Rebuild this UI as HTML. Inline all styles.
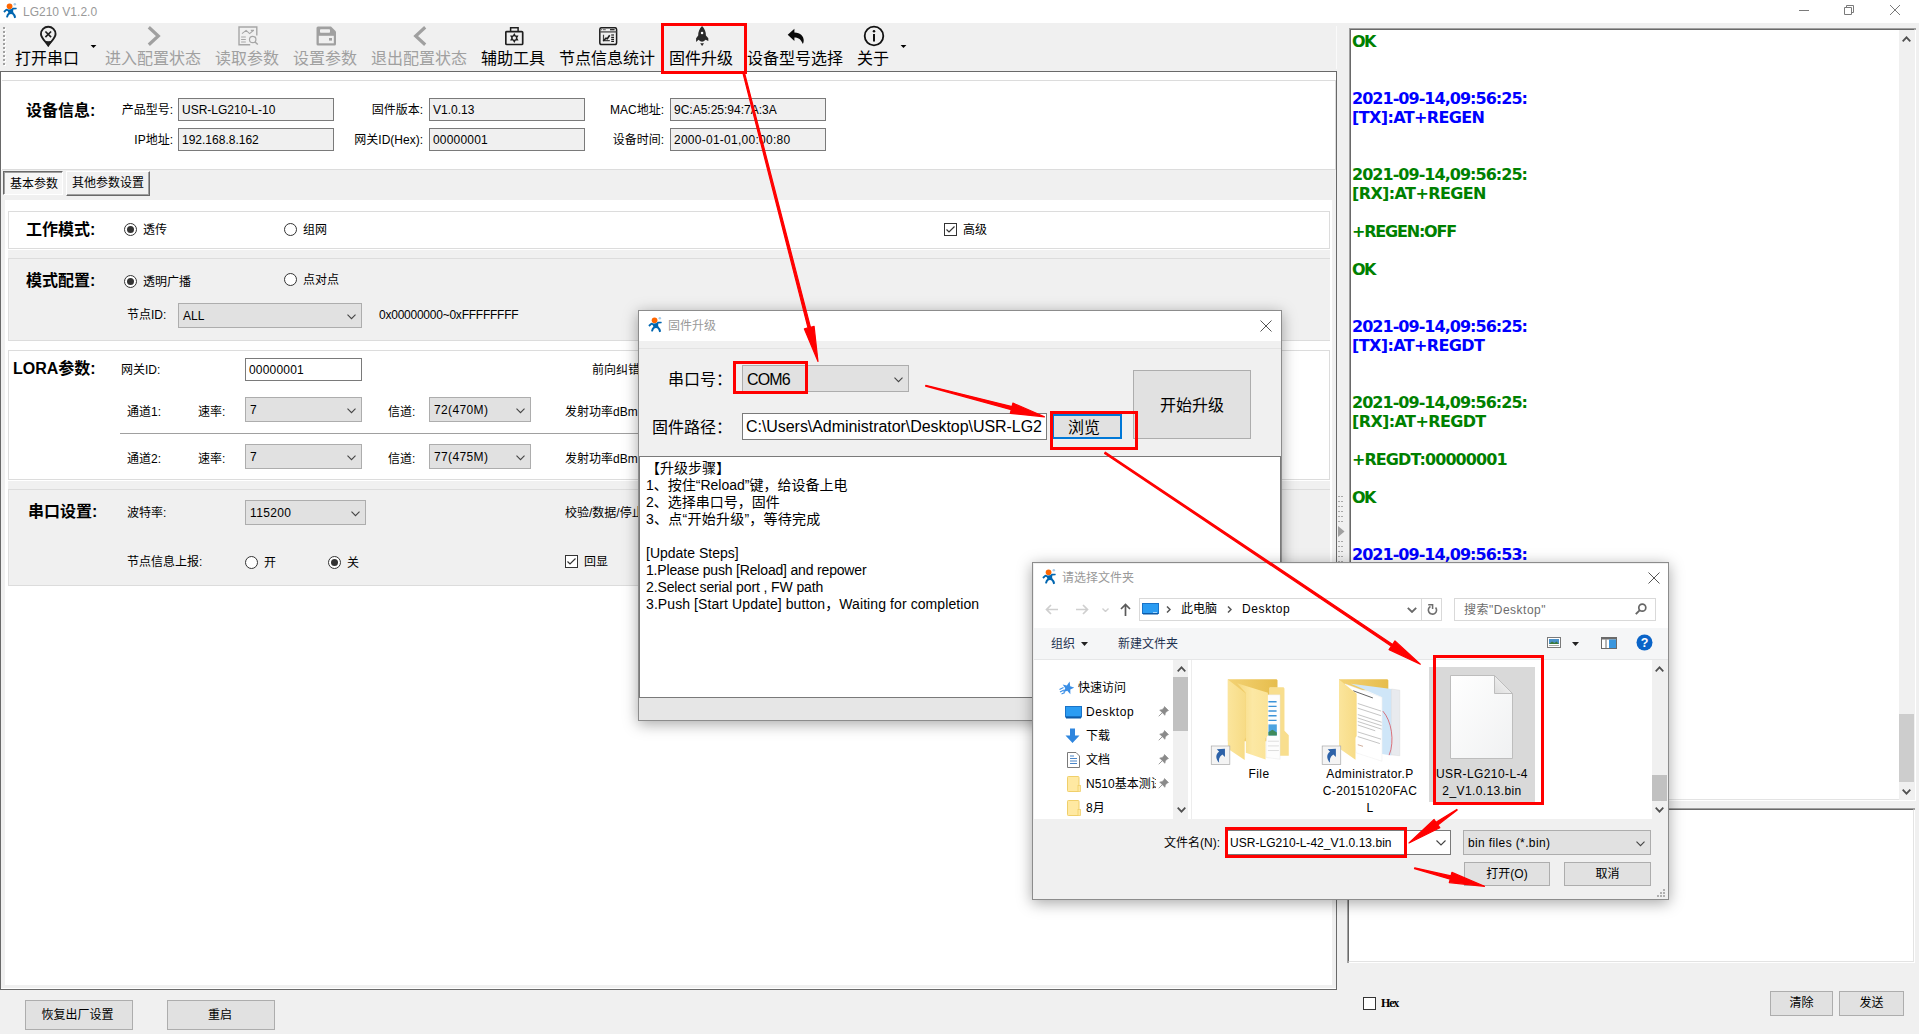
<!DOCTYPE html>
<html lang="zh-CN">
<head>
<meta charset="utf-8">
<title>LG210 V1.2.0</title>
<style>
*{box-sizing:border-box;margin:0;padding:0}
html,body{width:1919px;height:1034px;overflow:hidden;background:#f0f0f0}
body{position:relative;font-family:"Liberation Sans","Noto Sans CJK SC",sans-serif;font-size:12px;color:#000;line-height:1}
.a{position:absolute;white-space:nowrap}
.t12{font-size:12px;line-height:16px;height:16px}
.t16{font-size:16px;line-height:20px;height:20px}
.b16{font-size:16px;line-height:22px;height:22px;font-weight:bold;margin-top:1px}
.gray{color:#a0a0a0}
.inp{position:absolute;background:#f0f0f0;border:1px solid #7a7a7a;font-size:12px;line-height:23px;padding-left:3px;white-space:nowrap;overflow:hidden}
.inpw{background:#fff}
.cmb{position:absolute;background:#e1e1e1;border:1px solid #adadad;font-size:12px;line-height:24px;padding-left:4px;white-space:nowrap;overflow:hidden}
.cmb svg{position:absolute;right:5px;top:50%;margin-top:-2px}
.btn{position:absolute;background:#e1e1e1;border:1px solid #adadad;text-align:center;white-space:nowrap}
.radio{position:absolute;width:13px;height:13px;border:1px solid #333;border-radius:50%;background:#fff}
.radio.on::after{content:"";position:absolute;left:2px;top:2px;width:7px;height:7px;border-radius:50%;background:#333}
.chk{position:absolute;width:13px;height:13px;border:1px solid #333;background:#fff}
.box{position:absolute;border:1px solid #dcdcdc}
.log{font-family:"DejaVu Sans","Liberation Sans",sans-serif;font-weight:bold;font-size:16px;line-height:19px;height:19px;letter-spacing:-0.8px}
.g{color:#008000}.bl{color:#0000ff}
.red{position:absolute;border:3px solid #f00}
.dl{font-size:14px;line-height:17px;height:17px}
.fl{width:100px;text-align:center;letter-spacing:0.400px}
</style>
</head>
<body>
<!-- TITLE BAR -->
<div class="a" id="titlebar" style="left:0;top:0;width:1919px;height:23px;background:#fff"></div>
<svg class="a" style="left:0px;top:0px" width="20" height="20" viewBox="0 0 20 20">
<circle cx="9.550" cy="6.350" r="2.850" fill="#ff6600"/>
<circle cx="14.800" cy="4.300" r="1.250" fill="#a8cce8"/>
<path d="M3.300 11.300 L6.200 8.700 L8 9.200 Q9.600 9.800 11.600 9 L12.600 7.800 L16.400 7.700 Q17.200 8.500 16.400 9.300 L13.300 9.400 Q12.800 11.500 13.600 12.800 Q15.600 14.400 16.100 17.600 L14.200 18.200 Q13.600 15.400 12.200 14.300 Q10.600 13.600 9.400 14.500 Q8.300 15.600 7.900 17.600 L6 17.200 Q6.500 14.200 8.400 12.600 L7.600 11 L6.600 10.800 L4.600 12.800 Z" fill="#0066b0"/>
</svg>
<div class="a t12" style="left:23px;top:4px;color:#999">LG210 V1.2.0</div>
<svg class="a" style="left:1799px;top:4px" width="110" height="14" viewBox="0 0 110 14" fill="none" stroke="#7a7a7a" stroke-width="1">
<path d="M0 6.500 H10"/>
<path d="M45.500 3.500 h7 v7 h-7 z M47.500 3.500 v-2 h7 v7 h-2"/>
<path d="M91 1 l10 10 M101 1 l-10 10"/>
</svg>

<!-- TOOLBAR -->
<div class="a" id="toolbar" style="left:0;top:23px;width:1337px;height:48px;background:#f0f0f0"></div>
<div class="a" style="left:4px;top:28px;width:2px;height:38px;background:repeating-linear-gradient(#fff 0 2px,#f0f0f0 2px 4px)"></div>
<div class="a" style="left:3px;top:27px;width:2px;height:38px;background:repeating-linear-gradient(#a0a0a0 0 2px,transparent 2px 4px)"></div>


<div class="a" style="left:1336px;top:26px;width:1px;height:43px;background:#fafafa"></div>
<!-- toolbar buttons -->
<div class="a t16" style="left:15px;top:49px">打开串口</div>
<div class="a t16 gray" style="left:105px;top:49px">进入配置状态</div>
<div class="a t16 gray" style="left:215px;top:49px">读取参数</div>
<div class="a t16 gray" style="left:293px;top:49px">设置参数</div>
<div class="a t16 gray" style="left:371px;top:49px">退出配置状态</div>
<div class="a t16" style="left:481px;top:49px">辅助工具</div>
<div class="a t16" style="left:559px;top:49px">节点信息统计</div>
<div class="a t16" style="left:669px;top:49px">固件升级</div>
<div class="a t16" style="left:747px;top:49px">设备型号选择</div>
<div class="a t16" style="left:857px;top:49px">关于</div>
<svg class="a" style="left:90px;top:44px" width="7" height="4" viewBox="0 0 7 4"><path d="M0.600 0.900 h5.800 L3.500 4z" fill="#000"/></svg>
<svg class="a" style="left:900px;top:44px" width="7" height="4" viewBox="0 0 7 4"><path d="M0.600 0.900 h5.800 L3.500 4z" fill="#000"/></svg>
<!-- icon: pin with x -->
<svg class="a" style="left:39px;top:25px" width="18" height="22" viewBox="0 0 18 22">
<path d="M9.250 1.700 A7.300 7.300 0 0 1 16.550 9 C16.550 13 12 16.300 9.250 20.600 C6.500 16.300 1.950 13 1.950 9 A7.300 7.300 0 0 1 9.250 1.700 Z" fill="none" stroke="#1e1e1e" stroke-width="1.900"/>
<path d="M4.300 15 Q9.250 17.600 14.200 15 L9.250 21.300 Z" fill="#1e1e1e"/>
<path d="M6.400 6.500 l5.700 5.700 M12.100 6.500 l-5.700 5.700" stroke="#1e1e1e" stroke-width="1.700" fill="none"/>
</svg>
<!-- icon: chevron right (gray) -->
<svg class="a" style="left:147px;top:26px" width="14" height="20" viewBox="0 0 14 20"><path d="M1.800 1.300 L11.300 10 L1.800 18.700" fill="none" stroke="#a0a0a0" stroke-width="3.200"/></svg>
<!-- icon: read params (gray) -->
<svg class="a" style="left:238px;top:26px" width="21" height="20" viewBox="0 0 21 20" fill="none" stroke="#a6a6a6">
<path d="M12.200 18.800 H1 V1 H18.800 V9.400" stroke-width="1.400"/>
<path d="M4 7.600 L8.100 4.400 L11.600 7.600 L15.400 4.500 M12.800 4.400 H16" stroke-width="1.100"/>
<path d="M3.100 11 h4.700 M3.100 13.500 h4.700 M3.100 16 h4.700" stroke-width="1.100"/>
<circle cx="14.700" cy="13.500" r="3.200" stroke-width="1.200"/>
<path d="M17 15.900 l2.800 2.700" stroke-width="1.400"/>
</svg>
<!-- icon: save (gray) -->
<svg class="a" style="left:316px;top:26px" width="21" height="20" viewBox="0 0 21 20">
<path d="M2 0.500 H15 L20 5.500 V18 Q20 19.500 18.500 19.500 H2 Q0.500 19.500 0.500 18 V2 Q0.500 0.500 2 0.500 Z" fill="#a0a0a0"/>
<rect x="4" y="3.200" width="10" height="3.600" rx="0.800" fill="#f0f0f0"/>
<rect x="2.800" y="9.800" width="15" height="7.500" fill="#f0f0f0"/>
<rect x="13" y="12" width="3" height="2.600" fill="#a0a0a0"/>
</svg>
<!-- icon: chevron left (gray) -->
<svg class="a" style="left:413px;top:26px" width="14" height="20" viewBox="0 0 14 20"><path d="M12.200 1.300 L2.700 10 L12.200 18.700" fill="none" stroke="#a0a0a0" stroke-width="3.200"/></svg>
<!-- icon: toolbox with gear -->
<svg class="a" style="left:505px;top:26px" width="19" height="20" viewBox="0 0 19 20" fill="none" stroke="#1e1e1e">
<rect x="0.800" y="5.600" width="16.900" height="12.900" rx="1" stroke-width="1.700"/>
<path d="M5.600 5.600 V1.800 H13.100 V5.600" stroke-width="1.500"/>
<path d="M9.30 7.10 L10.75 9.49 L13.54 9.55 L12.20 12.00 L13.54 14.45 L10.75 14.51 L9.30 16.90 L7.85 14.51 L5.06 14.45 L6.40 12.00 L5.06 9.55 L7.85 9.49 Z" fill="#1e1e1e" stroke="none"/>
<circle cx="9.300" cy="12" r="1.700" fill="#f0f0f0" stroke="none"/>
</svg>
<!-- icon: window chart -->
<svg class="a" style="left:599px;top:27px" width="19" height="19" viewBox="0 0 19 19" fill="none" stroke="#1e1e1e">
<rect x="0.800" y="0.700" width="16.800" height="16.900" rx="1.800" stroke-width="1.500"/>
<path d="M1 4.900 H17.500" stroke-width="1.400" stroke="#555"/>
<path d="M2 2.700 h1 M3.800 2.700 h3" stroke-width="1" stroke="#666"/>
<path d="M11 2.700 h4.600" stroke-width="1.200"/>
<path d="M4.500 7.800 V13.600 H10.800" stroke-width="1.200" stroke="#444"/>
<path d="M4.200 14 L7 11.200 L8.300 11.800 L10.700 8.200" stroke-width="1.600"/>
<path d="M12.200 8 h2.800" stroke-width="1.600" stroke="#555"/>
<path d="M12.200 10.400 h2.800 M12.200 12.400 h2.800 M12.200 14.400 h2.800" stroke-width="1.100"/>
</svg>
<!-- icon: rocket -->
<svg class="a" style="left:694px;top:25px" width="16" height="22" viewBox="0 0 16 22">
<path d="M8.050 1 C10.600 3.500 12.100 7 11.900 10.600 L14.300 13.200 V15.900 L11.600 14.700 Q9.600 16.700 8.050 16.700 Q6.500 16.700 4.500 14.700 L2.100 17 V13.200 L4.200 10.600 C4 7 5.500 3.500 8.050 1 Z" fill="#2a2a2a"/>
<circle cx="8.050" cy="8.100" r="1.250" fill="#fff"/>
<path d="M6.200 18.300 H10 L8.100 21.100 Z" fill="#2a2a2a"/>
</svg>
<!-- icon: reply arrow -->
<svg class="a" style="left:787px;top:28px" width="18" height="17" viewBox="0 0 18 17">
<path d="M7.400 0.700 L0.700 6.800 L7.400 13 V9.500 C10.800 9.500 13.600 10.600 15.900 16.100 C18.300 10.600 15.500 4.700 7.400 4.400 Z" fill="#0a0a0a"/>
</svg>
<!-- icon: info -->
<svg class="a" style="left:863px;top:25px" width="22" height="22" viewBox="0 0 22 22" fill="none" stroke="#111">
<circle cx="11" cy="11" r="9.300" stroke-width="1.800"/>
<path d="M11 9 V16.600" stroke-width="2"/>
<circle cx="11" cy="6.200" r="1.250" fill="#111" stroke="none"/>
</svg>

<!-- MAIN LEFT PANEL -->
<div class="a" id="leftpanel" style="left:0;top:71px;width:1337px;height:919px;background:#fff;border-left:1px solid #696969;border-top:1px solid #696969;border-right:1px solid #696969;border-bottom:1px solid #696969"></div>


<!-- device info -->
<div class="a" style="left:2px;top:80px;width:1334px;height:90px;border-top:1px solid #dcdcdc;border-bottom:1px solid #dcdcdc;border-right:1px solid #dcdcdc"></div>
<div class="a b16" style="left:26px;top:99px">设备信息:</div>
<div class="a t12" style="left:119px;top:102px;width:54px;text-align:right">产品型号:</div>
<div class="inp" style="left:178px;top:98px;width:156px;height:23px">USR-LG210-L-10</div>
<div class="a t12" style="left:119px;top:132px;width:54px;text-align:right">IP地址:</div>
<div class="inp" style="left:178px;top:128px;width:156px;height:23px">192.168.8.162</div>
<div class="a t12" style="left:343px;top:102px;width:80px;text-align:right">固件版本:</div>
<div class="inp" style="left:429px;top:98px;width:156px;height:23px">V1.0.13</div>
<div class="a t12" style="left:343px;top:132px;width:80px;text-align:right">网关ID(Hex):</div>
<div class="inp" style="left:429px;top:128px;width:156px;height:23px;letter-spacing:0.200px">00000001</div>
<div class="a t12" style="left:584px;top:102px;width:80px;text-align:right">MAC地址:</div>
<div class="inp" style="left:670px;top:98px;width:156px;height:23px">9C:A5:25:94:7A:3A</div>
<div class="a t12" style="left:584px;top:132px;width:80px;text-align:right">设备时间:</div>
<div class="inp" style="left:670px;top:128px;width:156px;height:23px;letter-spacing:0.260px">2000-01-01,00:00:80</div>

<!-- tabs strip -->
<div class="a" style="left:1px;top:170px;width:1335px;height:30px;background:#f0f0f0"></div>
<div class="a" style="left:1px;top:200px;width:4px;height:785px;background:#f0f0f0"></div>
<div class="a" style="left:1332px;top:200px;width:4px;height:785px;background:#f0f0f0"></div>
<div class="a" style="left:1px;top:985px;width:1335px;height:3px;background:#f0f0f0"></div>
<div class="a t12" style="left:3px;top:171px;width:60px;height:24px;line-height:24px;padding-left:2px;text-align:center;background:#f6f6f6;border:1px solid;border-color:#696969 #fff #fff #696969;box-shadow:inset 1px 1px 0 #a0a0a0">基本参数</div>
<div class="a t12" style="left:66px;top:171px;width:84px;height:25px;line-height:23px;text-align:center;background:#f0f0f0;border:1px solid;border-color:#fff #696969 #696969 #fff;box-shadow:inset -1px -1px 0 #a0a0a0">其他参数设置</div>

<!-- work mode -->
<div class="box" style="left:8px;top:211px;width:1322px;height:38px;background:#fff"></div>
<div class="a b16" style="left:26px;top:218px">工作模式:</div>
<div class="radio on" style="left:124px;top:223px"></div>
<div class="a t12" style="left:143px;top:222px">透传</div>
<div class="radio" style="left:284px;top:223px"></div>
<div class="a t12" style="left:303px;top:222px">组网</div>
<div class="chk" style="left:944px;top:223px"><svg width="11" height="11" viewBox="0 0 11 11" style="position:absolute;left:0;top:0"><path d="M1.500 5.500 L4 8 L9.500 2.500" fill="none" stroke="#333" stroke-width="1.200"/></svg></div>
<div class="a t12" style="left:963px;top:222px">高级</div>

<!-- mode config -->
<div class="a" style="left:8px;top:250px;width:1322px;height:91px;background:#f0f0f0"></div>
<div class="box" style="left:8px;top:258px;width:1322px;height:83px;border-right:none"></div>
<div class="a b16" style="left:26px;top:269px">模式配置:</div>
<div class="radio on" style="left:124px;top:275px"></div>
<div class="a t12" style="left:143px;top:274px">透明广播</div>
<div class="radio" style="left:284px;top:273px"></div>
<div class="a t12" style="left:303px;top:272px">点对点</div>
<div class="a t12" style="left:127px;top:307px">节点ID:</div>
<div class="cmb" style="left:178px;top:303px;width:184px;height:25px">ALL<svg width="9" height="6" viewBox="0 0 9 6"><path d="M0.500 0.700 L4.500 4.700 L8.500 0.700" fill="none" stroke="#444" stroke-width="1.100"/></svg></div>
<div class="a t12" style="left:379px;top:307px;letter-spacing:-0.240px">0x00000000~0xFFFFFFFF</div>

<!-- LORA -->
<div class="box" style="left:8px;top:350px;width:1322px;height:130px;background:#fff"></div>
<div class="a b16" style="left:13px;top:357px">LORA参数:</div>
<div class="a t12" style="left:121px;top:362px">网关ID:</div>
<div class="inp inpw" style="left:245px;top:358px;width:117px;height:23px;letter-spacing:0.200px">00000001</div>
<div class="a t12" style="left:592px;top:362px">前向纠错</div>
<div class="a t12" style="left:127px;top:404px">通道1:</div>
<div class="a t12" style="left:198px;top:404px">速率:</div>
<div class="cmb" style="left:245px;top:397px;width:117px;height:25px">7<svg width="9" height="6" viewBox="0 0 9 6"><path d="M0.500 0.700 L4.500 4.700 L8.500 0.700" fill="none" stroke="#444" stroke-width="1.100"/></svg></div>
<div class="a t12" style="left:388px;top:404px">信道:</div>
<div class="cmb" style="left:429px;top:397px;width:102px;height:25px;letter-spacing:0.370px">72(470M)<svg width="9" height="6" viewBox="0 0 9 6"><path d="M0.500 0.700 L4.500 4.700 L8.500 0.700" fill="none" stroke="#444" stroke-width="1.100"/></svg></div>
<div class="a t12" style="left:565px;top:404px">发射功率dBm</div>
<div class="a" style="left:120px;top:433px;width:1100px;height:1px;background:#a0a0a0"></div>
<div class="a t12" style="left:127px;top:451px">通道2:</div>
<div class="a t12" style="left:198px;top:451px">速率:</div>
<div class="cmb" style="left:245px;top:444px;width:117px;height:25px">7<svg width="9" height="6" viewBox="0 0 9 6"><path d="M0.500 0.700 L4.500 4.700 L8.500 0.700" fill="none" stroke="#444" stroke-width="1.100"/></svg></div>
<div class="a t12" style="left:388px;top:451px">信道:</div>
<div class="cmb" style="left:429px;top:444px;width:102px;height:25px;letter-spacing:0.370px">77(475M)<svg width="9" height="6" viewBox="0 0 9 6"><path d="M0.500 0.700 L4.500 4.700 L8.500 0.700" fill="none" stroke="#444" stroke-width="1.100"/></svg></div>
<div class="a t12" style="left:565px;top:451px">发射功率dBm</div>

<!-- serial -->
<div class="a" style="left:8px;top:481px;width:1322px;height:105px;background:#f0f0f0"></div>
<div class="box" style="left:8px;top:489px;width:1322px;height:97px;border-right:none"></div>
<div class="a b16" style="left:28px;top:500px">串口设置:</div>
<div class="a t12" style="left:127px;top:505px">波特率:</div>
<div class="cmb" style="left:245px;top:500px;width:121px;height:25px;letter-spacing:0.350px">115200<svg width="9" height="6" viewBox="0 0 9 6"><path d="M0.500 0.700 L4.500 4.700 L8.500 0.700" fill="none" stroke="#444" stroke-width="1.100"/></svg></div>
<div class="a t12" style="left:565px;top:505px">校验/数据/停止</div>
<div class="a t12" style="left:127px;top:554px">节点信息上报:</div>
<div class="radio" style="left:245px;top:556px"></div>
<div class="a t12" style="left:264px;top:555px">开</div>
<div class="radio on" style="left:328px;top:556px"></div>
<div class="a t12" style="left:347px;top:555px">关</div>
<div class="chk" style="left:565px;top:555px"><svg width="11" height="11" viewBox="0 0 11 11" style="position:absolute;left:0;top:0"><path d="M1.500 5.500 L4 8 L9.500 2.500" fill="none" stroke="#333" stroke-width="1.200"/></svg></div>
<div class="a t12" style="left:584px;top:554px">回显</div>

<!-- bottom buttons -->
<div class="btn t12" style="left:25px;top:1000px;width:108px;height:30px;line-height:29px;padding-right:3px">恢复出厂设置</div>
<div class="btn t12" style="left:167px;top:1000px;width:108px;height:30px;line-height:29px;padding-right:2px">重启</div>

<!-- RIGHT LOG PANEL -->
<div class="a" id="logpanel" style="left:1350px;top:29px;width:565px;height:771px;background:#fff;border-left:1px solid #696969;border-top:1px solid #696969;border-right:1px solid #e3e3e3;border-bottom:1px solid #e3e3e3;box-shadow:-1px -1px 0 #a0a0a0,1px 1px 0 #fff,-1px 1px 0 #a0a0a0,1px -1px 0 #a0a0a0"></div>


<!-- log lines -->
<div class="a log g" style="left:1352px;top:32px;letter-spacing:-1.500px">OK</div>
<div class="a log bl" style="left:1352px;top:89px;letter-spacing:-0.970px">2021-09-14,09:56:25:</div>
<div class="a log bl" style="left:1352px;top:108px;letter-spacing:-0.620px">[TX]:AT+REGEN</div>
<div class="a log g" style="left:1352px;top:165px;letter-spacing:-0.970px">2021-09-14,09:56:25:</div>
<div class="a log g" style="left:1352px;top:184px;letter-spacing:-0.620px">[RX]:AT+REGEN</div>
<div class="a log g" style="left:1352px;top:222px;letter-spacing:-1.200px">+REGEN:OFF</div>
<div class="a log g" style="left:1352px;top:260px;letter-spacing:-1.500px">OK</div>
<div class="a log bl" style="left:1352px;top:317px;letter-spacing:-0.970px">2021-09-14,09:56:25:</div>
<div class="a log bl" style="left:1352px;top:336px;letter-spacing:-0.620px">[TX]:AT+REGDT</div>
<div class="a log g" style="left:1352px;top:393px;letter-spacing:-0.970px">2021-09-14,09:56:25:</div>
<div class="a log g" style="left:1352px;top:412px;letter-spacing:-0.620px">[RX]:AT+REGDT</div>
<div class="a log g" style="left:1352px;top:450px;letter-spacing:-0.930px">+REGDT:00000001</div>
<div class="a log g" style="left:1352px;top:488px;letter-spacing:-1.500px">OK</div>
<div class="a log bl" style="left:1352px;top:545px;letter-spacing:-0.970px">2021-09-14,09:56:53:</div>
<!-- log scrollbar -->
<div class="a" style="left:1899px;top:30px;width:16px;height:770px;background:#f0f0f0"></div>
<svg class="a" style="left:1902px;top:36px" width="9" height="6" viewBox="0 0 9 6"><path d="M0.700 5.300 L4.500 1.300 L8.300 5.300" fill="none" stroke="#505050" stroke-width="1.800"/></svg>
<div class="a" style="left:1899px;top:714px;width:15px;height:68px;background:#cdcdcd"></div>
<svg class="a" style="left:1902px;top:789px" width="9" height="6" viewBox="0 0 9 6"><path d="M0.700 0.700 L4.500 4.700 L8.300 0.700" fill="none" stroke="#505050" stroke-width="1.800"/></svg>
<!-- send box -->
<div class="a" style="left:1348px;top:809px;width:566px;height:153px;background:#fff;border-left:1px solid #696969;border-top:1px solid #696969;border-right:1px solid #e3e3e3;border-bottom:1px solid #e3e3e3;box-shadow:-1px -1px 0 #a0a0a0,1px 1px 0 #fff,-1px 1px 0 #a0a0a0,1px -1px 0 #a0a0a0"></div>
<div class="chk" style="left:1363px;top:997px"></div>
<div class="a" style="left:1381px;top:996px;font-family:'Liberation Serif','DejaVu Serif',serif;font-size:12px;font-weight:bold;line-height:14px;letter-spacing:-1.200px">Hex</div>
<div class="btn t12" style="left:1770px;top:991px;width:63px;height:25px;line-height:23px">清除</div>
<div class="btn t12" style="left:1839px;top:991px;width:65px;height:25px;line-height:23px">发送</div>
<!-- splitter handle -->
<div class="a" style="left:1338px;top:496px;width:2px;height:27px;background:repeating-linear-gradient(#a8a8a8 0 1px,#f0f0f0 1px 5px)"></div>
<div class="a" style="left:1338px;top:541px;width:2px;height:22px;background:repeating-linear-gradient(#a8a8a8 0 1px,#f0f0f0 1px 5px)"></div>
<div class="a" style="left:1341px;top:496px;width:2px;height:27px;background:repeating-linear-gradient(#a8a8a8 0 1px,#f0f0f0 1px 5px)"></div>
<div class="a" style="left:1341px;top:541px;width:2px;height:22px;background:repeating-linear-gradient(#a8a8a8 0 1px,#f0f0f0 1px 5px)"></div>
<svg class="a" style="left:1338px;top:526px" width="7" height="11" viewBox="0 0 7 11"><path d="M0 0 L6.500 5.500 L0 11 Z" fill="#a0a0a0"/></svg>


<!-- ===== FIRMWARE UPGRADE DIALOG ===== -->
<div class="a" id="dlg1" style="left:638px;top:310px;width:644px;height:411px;background:#f0f0f0;border:1px solid #8c8c8c;box-shadow:0 3px 14px rgba(0,0,0,0.35)">
<div class="a" style="left:0;top:0;width:642px;height:30px;background:#fff"></div>
<svg class="a" style="left:6px;top:3px" width="20" height="20" viewBox="0 0 20 20">
<circle cx="9.550" cy="6.350" r="2.850" fill="#ff6600"/>
<circle cx="14.800" cy="4.300" r="1.250" fill="#a8cce8"/>
<path d="M3.300 11.300 L6.200 8.700 L8 9.200 Q9.600 9.800 11.600 9 L12.600 7.800 L16.400 7.700 Q17.200 8.500 16.400 9.300 L13.300 9.400 Q12.800 11.500 13.600 12.800 Q15.600 14.400 16.100 17.600 L14.200 18.200 Q13.600 15.400 12.200 14.300 Q10.600 13.600 9.400 14.500 Q8.300 15.600 7.900 17.600 L6 17.200 Q6.500 14.200 8.400 12.600 L7.600 11 L6.600 10.800 L4.600 12.800 Z" fill="#0066b0"/>
</svg>
<div class="a t12" style="left:29px;top:7px;color:#999">固件升级</div>
<svg class="a" style="left:621px;top:9px" width="12" height="12" viewBox="0 0 12 12"><path d="M0.500 0.500 L11.500 11.500 M11.500 0.500 L0.500 11.500" stroke="#555" stroke-width="1" fill="none"/></svg>
<div class="a" style="left:0;top:37px;width:642px;height:1px;background:#e3e3e3"></div>
<div class="a t16" style="left:29px;top:59px">串口号：</div>
<div class="cmb" style="left:103px;top:54px;width:167px;height:27px;font-size:16px;line-height:27px;padding-left:4px;letter-spacing:-0.900px">COM6<svg width="9" height="6" viewBox="0 0 9 6"><path d="M0.500 0.700 L4.500 4.700 L8.500 0.700" fill="none" stroke="#444" stroke-width="1.100"/></svg></div>
<div class="a t16" style="left:13px;top:107px">固件路径：</div>
<div class="inp inpw" style="left:103px;top:102px;width:305px;height:27px;font-size:16px;line-height:26px;padding-left:3px;letter-spacing:-0.050px">C:\Users\Administrator\Desktop\USR-LG2</div>
<div class="btn t16" style="left:413px;top:103px;width:70px;height:25px;border:2px solid #0078d7;line-height:23px;padding-right:6px">浏览</div>
<div class="btn t16" style="left:494px;top:59px;width:118px;height:69px;line-height:69px">开始升级</div>
<div class="a" style="left:0;top:145px;width:642px;height:242px;background:#fff;border:1px solid #7a7a7a"></div>
<div class="a" style="left:0;top:387px;width:642px;height:22px;background:#e6e6e6"></div>
<div class="a dl" style="left:7px;top:149px">【升级步骤】</div>
<div class="a dl" style="left:7px;top:166px">1、按住“Reload”键，给设备上电</div>
<div class="a dl" style="left:7px;top:183px">2、选择串口号，固件</div>
<div class="a dl" style="left:7px;top:200px;letter-spacing:0.250px">3、点“开始升级”，等待完成</div>
<div class="a dl" style="left:7px;top:234px">[Update Steps]</div>
<div class="a dl" style="left:7px;top:251px;letter-spacing:-0.180px">1.Please push [Reload] and repower</div>
<div class="a dl" style="left:7px;top:268px;letter-spacing:-0.110px">2.Select serial port , FW path</div>
<div class="a dl" style="left:7px;top:285px;letter-spacing:0.090px">3.Push [Start Update] button，Waiting for completion</div>
</div>


<!-- ===== FILE DIALOG ===== -->
<div class="a" id="dlg2" style="left:1032px;top:562px;width:637px;height:338px;background:#f0f0f0;border:1px solid #8c8c8c;box-shadow:0 3px 14px rgba(0,0,0,0.35)">
<div class="a" style="left:1px;top:1px;width:634px;height:335px">
<div class="a" style="left:0;top:0;width:634px;height:65px;background:#fff"></div>
<svg class="a" style="left:5px;top:2px" width="20" height="20" viewBox="0 0 20 20">
<circle cx="9.550" cy="6.350" r="2.850" fill="#ff6600"/>
<circle cx="14.800" cy="4.300" r="1.250" fill="#a8cce8"/>
<path d="M3.300 11.300 L6.200 8.700 L8 9.200 Q9.600 9.800 11.600 9 L12.600 7.800 L16.400 7.700 Q17.200 8.500 16.400 9.300 L13.300 9.400 Q12.800 11.500 13.600 12.800 Q15.600 14.400 16.100 17.600 L14.200 18.200 Q13.600 15.400 12.200 14.300 Q10.600 13.600 9.400 14.500 Q8.300 15.600 7.900 17.600 L6 17.200 Q6.500 14.200 8.400 12.600 L7.600 11 L6.600 10.800 L4.600 12.800 Z" fill="#0066b0"/>
</svg>
<div class="a t12" style="left:28px;top:6px;color:#999">请选择文件夹</div>
<svg class="a" style="left:614px;top:8px" width="12" height="12" viewBox="0 0 12 12"><path d="M0.500 0.500 L11.500 11.500 M11.500 0.500 L0.500 11.500" stroke="#555" stroke-width="1" fill="none"/></svg>
<!-- nav arrows -->
<svg class="a" style="left:11px;top:40px" width="14" height="11" viewBox="0 0 14 11"><path d="M13 5.500 H1.500 M6 1 L1.500 5.500 L6 10" fill="none" stroke="#cfcfcf" stroke-width="1.700"/></svg>
<svg class="a" style="left:41px;top:40px" width="14" height="11" viewBox="0 0 14 11"><path d="M1 5.500 H12.500 M8 1 L12.500 5.500 L8 10" fill="none" stroke="#cfcfcf" stroke-width="1.700"/></svg>
<svg class="a" style="left:68px;top:44px" width="7" height="4" viewBox="0 0 7 4"><path d="M0.500 0.500 L3.500 3.500 L6.500 0.500" fill="none" stroke="#cfcfcf" stroke-width="1.400"/></svg>
<svg class="a" style="left:86px;top:39px" width="11" height="14" viewBox="0 0 11 14"><path d="M5.500 13 V1.500 M1 6 L5.500 1.500 L10 6" fill="none" stroke="#5a5a5a" stroke-width="1.700"/></svg>
<!-- address box -->
<div class="a" style="left:105px;top:34px;width:303px;height:23px;border:1px solid #d9d9d9;background:#fff"></div>
<svg class="a" style="left:108px;top:39px" width="17" height="12" viewBox="0 0 17 12"><rect x="0.500" y="0.500" width="16" height="10" fill="#2b9cf2" stroke="#1a73c8"/><rect x="1" y="10" width="15" height="1.500" fill="#0d5aa7"/><path d="M11 9.500 h4" stroke="#bfe3ff" stroke-width="0.800"/></svg>
<svg class="a" style="left:132px;top:42px" width="5" height="7" viewBox="0 0 5 7"><path d="M1 0.500 L4 3.500 L1 6.500" fill="none" stroke="#555" stroke-width="1.500"/></svg>
<div class="a t12" style="left:147px;top:37px">此电脑</div>
<svg class="a" style="left:193px;top:42px" width="5" height="7" viewBox="0 0 5 7"><path d="M1 0.500 L4 3.500 L1 6.500" fill="none" stroke="#555" stroke-width="1.500"/></svg>
<div class="a t12" style="left:208px;top:37px;letter-spacing:0.600px">Desktop</div>
<svg class="a" style="left:373px;top:43px" width="10" height="6" viewBox="0 0 10 6"><path d="M0.800 0.800 L5 5 L9.200 0.800" fill="none" stroke="#686868" stroke-width="1.800"/></svg>
<div class="a" style="left:387px;top:35px;width:1px;height:21px;background:#d9d9d9"></div>
<svg class="a" style="left:392px;top:39px" width="12" height="13" viewBox="0 0 12 13"><path d="M9.600 4.400 A4.100 4.100 0 1 1 4.500 3.450" fill="none" stroke="#6e6e6e" stroke-width="1.600"/><path d="M2.200 1.800 H6.600 V5.900" fill="none" stroke="#6e6e6e" stroke-width="1.500"/></svg>
<!-- search box -->
<div class="a" style="left:420px;top:34px;width:202px;height:23px;border:1px solid #d9d9d9;background:#fff"></div>
<div class="a t12" style="left:430px;top:38px;color:#6d6d6d;letter-spacing:0.500px">搜索"Desktop"</div>
<svg class="a" style="left:601px;top:39px" width="12" height="12" viewBox="0 0 12 12"><circle cx="7.300" cy="4.700" r="3.500" fill="none" stroke="#666" stroke-width="1.700"/><path d="M4.800 7.200 L0.800 11.200" stroke="#666" stroke-width="1.900"/></svg>
<!-- command bar -->
<div class="a" style="left:0;top:64px;width:634px;height:31px;background:#f5f6f7"></div>
<div class="a t12" style="left:17px;top:72px;color:#1e3250">组织</div>
<svg class="a" style="left:47px;top:78px" width="7" height="4" viewBox="0 0 7 4"><path d="M0 0h7L3.500 4z" fill="#222"/></svg>
<div class="a t12" style="left:84px;top:72px;color:#1e3250">新建文件夹</div>
<svg class="a" style="left:513px;top:73px" width="14" height="11" viewBox="0 0 14 11"><rect x="0.500" y="0.500" width="13" height="10" fill="#fff" stroke="#7a7a7a"/><rect x="2" y="2" width="10" height="5" fill="#4a90c8"/><path d="M2 7 l3 -2.500 l2.500 1.500 l2 -1.500 l2.500 2.500z" fill="#3c7a3c"/><rect x="2" y="8" width="10" height="1" fill="#aaa"/></svg>
<svg class="a" style="left:538px;top:78px" width="7" height="4" viewBox="0 0 7 4"><path d="M0 0h7L3.500 4z" fill="#222"/></svg>
<svg class="a" style="left:567px;top:73px" width="16" height="12" viewBox="0 0 16 12"><rect x="0.500" y="0.500" width="15" height="11" fill="#fff" stroke="#6a6a6a"/><rect x="0.500" y="0.500" width="15" height="2" fill="#6a6a6a"/><rect x="8" y="2.500" width="7" height="8.500" fill="#3a96dd"/><path d="M5 2.500 V11" stroke="#6a6a6a"/></svg>
<svg class="a" style="left:602px;top:70px" width="17" height="17" viewBox="0 0 17 17"><circle cx="8.500" cy="8.500" r="8" fill="#0a64c8"/><text x="8.500" y="13" font-family="Liberation Sans, sans-serif" font-weight="bold" font-size="12.500" fill="#fff" text-anchor="middle">?</text></svg>
<!-- nav pane -->
<div class="a" style="left:0;top:95px;width:618px;height:160px;background:#fff"></div>
<div class="a" style="left:157px;top:95px;width:1px;height:160px;background:#ededed"></div>
<div class="a" style="left:139px;top:95px;width:15px;height:160px;background:#f0f0f0"></div>
<svg class="a" style="left:143px;top:102px" width="9" height="6" viewBox="0 0 9 6"><path d="M0.700 5.300 L4.500 1.300 L8.300 5.300" fill="none" stroke="#505050" stroke-width="1.700"/></svg>
<div class="a" style="left:139px;top:113px;width:15px;height:54px;background:#c1c1c1"></div>
<svg class="a" style="left:143px;top:243px" width="9" height="6" viewBox="0 0 9 6"><path d="M0.700 0.700 L4.500 4.700 L8.300 0.700" fill="none" stroke="#505050" stroke-width="1.700"/></svg>
<!-- file area -->

<div class="a" style="left:618px;top:95px;width:16px;height:160px;background:#f0f0f0"></div>
<svg class="a" style="left:621px;top:102px" width="9" height="6" viewBox="0 0 9 6"><path d="M0.700 5.300 L4.500 1.300 L8.300 5.300" fill="none" stroke="#505050" stroke-width="1.700"/></svg>
<div class="a" style="left:618px;top:211px;width:15px;height:26px;background:#c1c1c1"></div>
<svg class="a" style="left:621px;top:243px" width="9" height="6" viewBox="0 0 9 6"><path d="M0.700 0.700 L4.500 4.700 L8.300 0.700" fill="none" stroke="#505050" stroke-width="1.700"/></svg>
<div class="a" style="left:0;top:95px;width:634px;height:1px;background:#e6e7e8"></div>
<!-- nav items -->
<svg class="a" style="left:25px;top:117px" width="15" height="14" viewBox="0 0 15 14"><g transform="rotate(14 9 7)"><path d="M9 0.300 L10.700 4.800 L15 5 L11.600 7.900 L12.800 12.500 L9 9.900 L5.200 12.500 L6.400 7.900 L3 5 L7.300 4.800 Z" fill="#3a8ee6"/></g><path d="M0.500 8.500 L4.500 6.500 M1 11 L5 9 M2.500 13 L6 11.500" stroke="#3a8ee6" stroke-width="1.100"/></svg>
<div class="a t12" style="left:44px;top:116px">快速访问</div>
<svg class="a" style="left:31px;top:142px" width="17" height="13" viewBox="0 0 17 13"><rect x="0.500" y="0.500" width="16" height="10.500" fill="#2b9cf2" stroke="#1a73c8"/><rect x="1" y="10.500" width="15" height="2" fill="#0d5aa7"/></svg>
<div class="a t12" style="left:52px;top:140px;letter-spacing:0.600px">Desktop</div>
<svg class="a" style="left:124px;top:142px" width="11" height="11" viewBox="0 0 11 11"><path d="M6.500 0.500 L10.500 4.500 L9.300 5 L7.300 7 L7 9.300 L4.300 6.700 L1 10 L0.800 10.200 L1 10 L4.300 6.700 L1.700 4 L4 3.700 L6 1.700 Z" fill="#8a8a8a" stroke="#8a8a8a" stroke-width="0.600"/></svg>
<svg class="a" style="left:31px;top:164px" width="15" height="16" viewBox="0 0 15 16"><path d="M5 0.500 H10 V7.500 H14.500 L7.500 15 L0.500 7.500 H5 Z" fill="#2f86de"/></svg>
<div class="a t12" style="left:52px;top:164px">下载</div>
<svg class="a" style="left:124px;top:166px" width="11" height="11" viewBox="0 0 11 11"><path d="M6.500 0.500 L10.500 4.500 L9.300 5 L7.300 7 L7 9.300 L4.300 6.700 L1 10 L0.800 10.200 L1 10 L4.300 6.700 L1.700 4 L4 3.700 L6 1.700 Z" fill="#8a8a8a" stroke="#8a8a8a" stroke-width="0.600"/></svg>
<svg class="a" style="left:33px;top:188px" width="13" height="16" viewBox="0 0 13 16"><path d="M0.500 0.500 H9 L12.500 4 V15.500 H0.500 Z" fill="#fff" stroke="#7a7a7a"/><path d="M3 4 h4 M3 6.500 h7 M3 9 h7 M3 11.500 h7" stroke="#4a86c8" stroke-width="1"/></svg>
<div class="a t12" style="left:52px;top:188px">文档</div>
<svg class="a" style="left:124px;top:190px" width="11" height="11" viewBox="0 0 11 11"><path d="M6.500 0.500 L10.500 4.500 L9.300 5 L7.300 7 L7 9.300 L4.300 6.700 L1 10 L0.800 10.200 L1 10 L4.300 6.700 L1.700 4 L4 3.700 L6 1.700 Z" fill="#8a8a8a" stroke="#8a8a8a" stroke-width="0.600"/></svg>
<svg class="a" style="left:33px;top:212px" width="14" height="16" viewBox="0 0 14 16"><rect x="0.500" y="0.500" width="11.500" height="15" rx="0.800" fill="#ffe9a2" stroke="#f0cf6a"/><rect x="11" y="9.500" width="2.500" height="6" fill="#ffe9a2" stroke="#f0cf6a" stroke-width="0.800"/></svg>
<div class="a t12" style="left:52px;top:212px;width:70px;overflow:hidden">N510基本测试</div>
<svg class="a" style="left:124px;top:214px" width="11" height="11" viewBox="0 0 11 11"><path d="M6.500 0.500 L10.500 4.500 L9.300 5 L7.300 7 L7 9.300 L4.300 6.700 L1 10 L0.800 10.200 L1 10 L4.300 6.700 L1.700 4 L4 3.700 L6 1.700 Z" fill="#8a8a8a" stroke="#8a8a8a" stroke-width="0.600"/></svg>
<svg class="a" style="left:33px;top:236px" width="14" height="16" viewBox="0 0 14 16"><rect x="0.500" y="0.500" width="11.500" height="15" rx="0.800" fill="#ffe9a2" stroke="#f0cf6a"/><rect x="11" y="9.500" width="2.500" height="6" fill="#ffe9a2" stroke="#f0cf6a" stroke-width="0.800"/></svg>
<div class="a t12" style="left:52px;top:236px">8月</div>
<!-- FILES -->
<div class="a" style="left:395px;top:103px;width:106px;height:135px;background:#d9d9d9"></div>
<div class="a t12 fl" style="left:175px;top:202px">File</div>
<div class="a t12 fl" style="left:286px;top:202px">Administrator.P</div>
<div class="a t12 fl" style="left:286px;top:219px">C-20151020FAC</div>
<div class="a t12 fl" style="left:286px;top:236px">L</div>
<div class="a t12 fl" style="left:398px;top:202px">USR-LG210-L-4</div>
<div class="a t12 fl" style="left:398px;top:219px">2_V1.0.13.bin</div>

<!-- folder icons -->
<svg class="a" style="left:166px;top:96px" width="220" height="120" viewBox="0 0 1896 1034">
<defs>
<linearGradient id="fb" x1="0" y1="0" x2="1" y2="0"><stop offset="0" stop-color="#f3d274"/><stop offset="1" stop-color="#e6bd4c"/></linearGradient>
<linearGradient id="ff" x1="0" y1="0" x2="1" y2="0"><stop offset="0" stop-color="#fbe59c"/><stop offset="1" stop-color="#f7db85"/></linearGradient>
<linearGradient id="fm" x1="0" y1="0" x2="1" y2="0"><stop offset="0" stop-color="#f6d97f"/><stop offset="0.5" stop-color="#fce8a4"/><stop offset="1" stop-color="#fbe397"/></linearGradient>
</defs>
<!-- folder 1 -->
<path d="M240 165 H660 L668 175 V240 H600 V700 H240 Z" fill="url(#fb)"/>
<path d="M600 235 H720 L728 245 V610 L765 648 V825 H600 Z" fill="#f8de8e"/>
<path d="M575 300 H690 V855 L570 840 Z" fill="#fdfdfd" stroke="#e0e0e0" stroke-width="3"/>
<path d="M590 360 h70 M590 400 h70 M590 440 h70 M590 480 h70 M590 520 h70" stroke="#3d93d8" stroke-width="12"/>
<rect x="590" y="555" width="72" height="95" fill="#4da3e0"/>
<path d="M590 620 l35 -20 l37 25 v25 h-72z" fill="#3e8a5a"/>
<path d="M585 700 h95 M585 740 h95 M585 780 h95" stroke="#d0d0d0" stroke-width="6"/>
<path d="M320 200 L585 282 V650 L565 675 V858 L395 800 V285 Z" fill="url(#fm)"/>
<path d="M240 168 L395 288 V668 L385 682 V862 L240 765 Z" fill="url(#ff)"/>
<!-- shortcut 1 -->
<rect x="97" y="741" width="160" height="160" fill="#f4f4f4" stroke="#a8a8a8" stroke-width="6"/>
<path d="M215 765 L215 835 L193 815 C165 835 160 860 165 885 C130 850 135 805 165 790 L145 770 Z" fill="#2d62a8"/>
<!-- folder 2 -->
<path d="M1198 165 H1615 L1623 175 V260 H1300 V700 H1198 Z" fill="url(#fb)"/>
<path d="M1300 205 L1650 250 V822 L1570 810 V320 Z" fill="#cfe6f8"/>
<path d="M1650 250 L1722 260 V825 L1650 818 Z" fill="#e8eaee" stroke="#d0d0d0" stroke-width="3"/>
<path d="M1575 440 C1650 520 1680 700 1630 820" fill="none" stroke="#d8404a" stroke-width="6"/>
<path d="M1248 205 L1568 322 V872 L1345 800 Z" fill="#fff" stroke="#e4e4e4" stroke-width="3"/>
<g stroke="#9a9a9a" stroke-width="5" fill="none">
<path d="M1320 265 l170 62" stroke="#555" stroke-width="8"/>
<path d="M1360 375 l200 65 M1360 415 l200 65"/>
<path d="M1360 470 l205 66 M1360 500 l205 66 M1360 530 l205 66 M1360 560 l150 50"/>
<path d="M1360 620 l200 62 M1360 660 l190 60"/>
<path d="M1360 730 l45 14" stroke="#b07050"/>
</g>
<path d="M1198 168 L1350 290 V655 L1340 670 V860 L1198 760 Z" fill="url(#ff)"/>
<!-- shortcut 2 -->
<rect x="1053" y="741" width="160" height="160" fill="#f4f4f4" stroke="#a8a8a8" stroke-width="6"/>
<path d="M1171 765 L1171 835 L1149 815 C1121 835 1116 860 1121 885 C1086 850 1091 805 1121 790 L1101 770 Z" fill="#2d62a8"/>
</svg>
<!-- file icon -->
<svg class="a" style="left:415px;top:110px" width="65" height="86" viewBox="0 0 65 86">
<defs><linearGradient id="pg" x1="0" y1="0" x2="1" y2="1"><stop offset="0" stop-color="#ffffff"/><stop offset="1" stop-color="#f0f1f2"/></linearGradient>
<linearGradient id="pf" x1="0" y1="1" x2="1" y2="0"><stop offset="0" stop-color="#dcdcdc"/><stop offset="1" stop-color="#fafafa"/></linearGradient></defs>
<path d="M1.500 1.500 H45.500 L63.500 19.500 V84.500 H1.500 Z" fill="url(#pg)" stroke="#bdbdbd" stroke-width="1"/>
<path d="M45.500 1.500 V19.500 H63.500 Z" fill="url(#pf)" stroke="#bdbdbd" stroke-width="1"/>
</svg>
<!-- bottom -->
<div class="a t12" style="left:116px;top:271px;width:70px;text-align:right">文件名(N):</div>
<div class="inp inpw" style="left:192px;top:266px;width:225px;height:25px;line-height:25px;padding-left:3px;border-color:#7a7a7a;letter-spacing:0.030px">USR-LG210-L-42_V1.0.13.bin<svg style="position:absolute;right:4px;top:9px" width="10" height="6" viewBox="0 0 10 6"><path d="M0.500 0.500 L5 5 L9.500 0.500" fill="none" stroke="#444" stroke-width="1.100"/></svg></div>
<div class="cmb" style="left:429px;top:266px;width:188px;height:25px;line-height:24px;letter-spacing:0.370px">bin files (*.bin)<svg width="9" height="6" viewBox="0 0 9 6"><path d="M0.500 0.700 L4.500 4.700 L8.500 0.700" fill="none" stroke="#444" stroke-width="1.100"/></svg></div>
<div class="btn t12" style="left:430px;top:298px;width:86px;height:24px;line-height:22px">打开(O)</div>
<div class="btn t12" style="left:530px;top:298px;width:87px;height:24px;line-height:22px">取消</div>
<svg class="a" style="left:623px;top:325px" width="9" height="9" viewBox="0 0 9 9" fill="#b0b0b0"><rect x="6" y="0" width="2" height="2"/><rect x="3" y="3" width="2" height="2"/><rect x="6" y="3" width="2" height="2"/><rect x="0" y="6" width="2" height="2"/><rect x="3" y="6" width="2" height="2"/><rect x="6" y="6" width="2" height="2"/></svg>
</div>
</div>


<!-- ===== RED ANNOTATIONS ===== -->
<svg class="a" style="left:0;top:0;pointer-events:none" width="1919" height="1034" viewBox="0 0 1919 1034">
<rect x="662.5" y="24.5" width="83" height="48" fill="none" stroke="#f00" stroke-width="3"/>
<rect x="734.5" y="362.5" width="72" height="30" fill="none" stroke="#f00" stroke-width="3"/>
<rect x="1051.5" y="412.5" width="85" height="36" fill="none" stroke="#f00" stroke-width="3"/>
<rect x="1434.5" y="656.5" width="108" height="147" fill="none" stroke="#f00" stroke-width="3"/>
<rect x="1226.5" y="828.5" width="179" height="28" fill="none" stroke="#f00" stroke-width="3"/>
<path d="M743.2 74.2 L808.0 327.9 L804.4 328.9 L818.0 361.5 L814.1 326.4 L810.5 327.3 L744.8 73.8 Z" fill="#f00" stroke="#f00" stroke-width="1.200" stroke-linejoin="round"/>
<path d="M925.6 386.1 L1011.2 409.7 L1010.3 413.3 L1044.5 416.8 L1012.9 403.1 L1012.0 406.6 L925.8 385.3 Z" fill="#f00" stroke="#f00" stroke-width="1.200" stroke-linejoin="round"/>
<path d="M1104.6 453.4 L1391.4 646.2 L1389.1 649.6 L1420.3 664.2 L1395.0 640.9 L1392.7 644.4 L1105.4 452.2 Z" fill="#f00" stroke="#f00" stroke-width="1.200" stroke-linejoin="round"/>
<path d="M1456.8 809.4 L1436.0 822.3 L1434.1 819.5 L1409.0 843.0 L1439.8 827.7 L1437.8 824.9 L1457.2 810.0 Z" fill="#f00" stroke="#f00" stroke-width="1.200" stroke-linejoin="round"/>
<path d="M1414.5 868.6 L1450.2 879.2 L1449.3 882.6 L1484.5 886.3 L1451.9 872.4 L1451.0 875.9 L1414.7 867.8 Z" fill="#f00" stroke="#f00" stroke-width="1.200" stroke-linejoin="round"/>
</svg>

</body>
</html>
